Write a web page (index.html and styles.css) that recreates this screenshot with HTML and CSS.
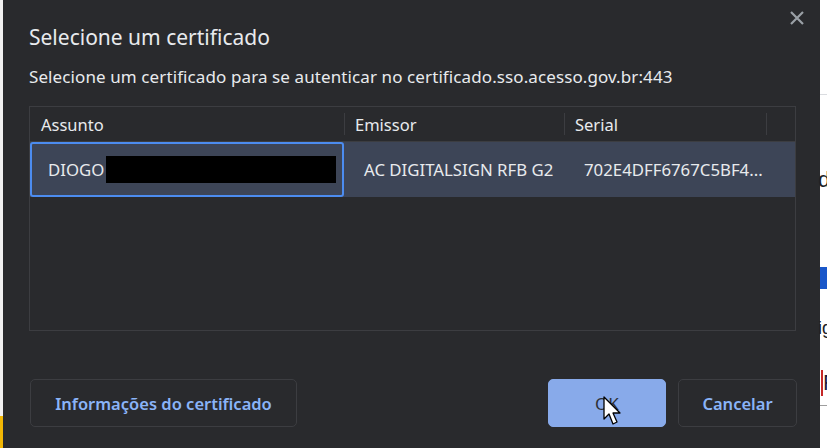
FILE: index.html
```html
<!DOCTYPE html>
<html lang="pt-BR">
<head>
  <meta charset="UTF-8">
  <title>Selecione um certificado</title>
  <link rel="stylesheet" href="styles.css">
</head>
<body>
  <div class="screen">
    <div class="edge-left"><span class="edge-yellow"></span></div>

    <div class="dialog">
      <button class="close" aria-label="Fechar">
        <svg width="14" height="14" viewBox="0 0 14 14"><path d="M1 1 L13 13 M13 1 L1 13" stroke="#9aa0a6" stroke-width="2.2" fill="none"/></svg>
      </button>
      <h1 class="title">Selecione um certificado</h1>
      <p class="subtitle">Selecione um certificado para se autenticar no certificado.sso.acesso.gov.br:443</p>

      <div class="table">
        <div class="row head">
          <div class="cell c1">Assunto</div>
          <div class="cell c2">Emissor</div>
          <div class="cell c3">Serial</div>
          <div class="cell c4"></div>
        </div>
        <div class="row selected">
          <div class="cell c1 focus">DIOGO<span class="redact"></span></div>
          <div class="cell c2">AC DIGITALSIGN RFB G2</div>
          <div class="cell c3">702E4DFF6767C5BF4...</div>
          <div class="cell c4"></div>
        </div>
      </div>

      <div class="actions">
        <button class="btn">Informações do certificado</button>
        <span class="spacer"></span>
        <button class="btn primary">OK
          <svg class="cursor" width="20" height="30" viewBox="0 0 20 30"><path d="M1 1 L1 23 L6 18 L10 28 L14 26 L10 17 L17 17 Z" fill="#fff" stroke="#000" stroke-width="1.3" stroke-linejoin="round"/></svg>
        </button>
        <button class="btn">Cancelar</button>
      </div>
    </div>

    <div class="page">
      <div class="page-line top"></div>
      <span class="page-txt t1">d</span>
      <span class="page-blue"></span>
      <span class="page-txt t2">ig</span>
      <span class="page-txt t3">F</span>
      <div class="page-line bottom"></div>
    </div>
  </div>
</body>
</html>
```

FILE: styles.css
```css
* {
  box-sizing: border-box;
}
body {
  margin: 0;
  background: #fff;
  font-family: "Noto Sans", "Open Sans", sans-serif;
  overflow: hidden;
}
.screen {
  display: flex;
  width: 827px;
  height: 448px;
}
.edge-left {
  width: 3px;
  position: relative;
  background: #f1f1f1;
}
.edge-yellow {
  position: absolute;
  left: 0;
  top: 416px;
  width: 3px;
  height: 32px;
  background: #f2b705;
}
.dialog {
  position: relative;
  width: 817px;
  height: 448px;
  background: #292a2d;
  color: #e8eaed;
  padding: 0 24px 0 26px;
  display: flex;
  flex-direction: column;
}
.close {
  position: absolute;
  right: 16px;
  top: 11px;
  background: none;
  border: none;
  padding: 0;
  width: 14px;
  height: 14px;
}
.title {
  margin: 23px 0 0;
  font-size: 21px;
  font-weight: 400;
  line-height: 28px;
}
.subtitle {
  margin: 14px 0 0;
  font-size: 17px;
  line-height: 24px;
  letter-spacing: 0.1px;
}
.table {
  margin-top: 17px;
  height: 225px;
  border: 1px solid #3c3d41;
}
.row {
  display: flex;
}
.head {
  height: 35px;
  border-bottom: 1px solid #3c3d41;
  font-size: 16.5px;
}
.head .cell {
  padding: 2px 0 0 11px;
  line-height: 32px;
  position: relative;
}
.head .cell + .cell::before {
  content: "";
  position: absolute;
  left: 0;
  top: 6px;
  bottom: 6px;
  width: 1px;
  background: #3c3d41;
}
.c1 { width: 314px; }
.c2 { width: 220px; }
.c3 { width: 202px; }
.c4 { flex: 1; }
.selected {
  height: 55px;
  background: #3d4557;
  font-size: 16.8px;
}
.selected .cell {
  display: flex;
  align-items: center;
  padding-left: 20px;
}
.selected .c1 {
  padding-left: 16px;
}
.focus {
  border: 2px solid #4c8cf0;
  border-radius: 3px;
}
.redact {
  display: inline-block;
  width: 230px;
  height: 27px;
  margin-left: 2px;
  background: #000;
}
.actions {
  display: flex;
  gap: 12px;
  margin: 48px -1px 0 0;
  padding-left: 1px;
}
.spacer {
  flex: 1;
}
.btn {
  position: relative;
  height: 48px;
  padding: 0 10px;
  background: #292a2d;
  border: 1px solid #3c3d41;
  border-radius: 5px;
  color: #8ab4f8;
  font-family: "Noto Sans", "Open Sans", sans-serif;
  font-size: 16.5px;
  font-weight: 600;
}
.btn:first-child {
  width: 267px;
}
.primary {
  width: 118px;
  background: #88aaea;
  border-color: #88aaea;
  color: #2d3035;
  font-weight: 400;
  font-size: 17px;
}
.btn:last-child {
  width: 119px;
}
.cursor {
  position: absolute;
  left: 54px;
  top: 16px;
}
.page {
  flex: 1;
  position: relative;
  background: #fff;
}
.page-line {
  position: absolute;
  left: 0;
  right: 0;
  height: 1px;
  background: #dadce0;
}
.page-line.top { top: 94px; }
.page-line.bottom { top: 405px; background: #9e9e9e; }
.page-txt {
  position: absolute;
  left: -2px;
  font-family: "Liberation Sans", sans-serif;
  font-size: 22px;
  color: #202124;
}
.t1 { top: 167px; }
.t2 { top: 318px; font-size: 18px; }
.t3 { top: 370px; left: 1px; color: #1f1f3a; border-left: 2px solid #c62828; }
.page-blue {
  position: absolute;
  left: 0;
  top: 267px;
  width: 7px;
  height: 22px;
  background: #1a57c9;
}
```
